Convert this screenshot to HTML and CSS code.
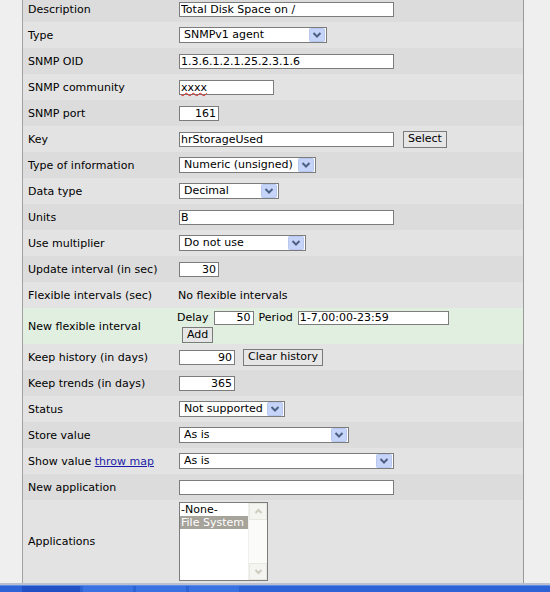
FILE: index.html
```html
<!DOCTYPE html>
<html>
<head>
<meta charset="utf-8">
<link rel="stylesheet" href="styles.css">
</head>
<body>
<div class="frame">
  <div class="row dark"><div class="lbl">Description</div><div class="val"><input class="txt w215" value="Total Disk Space on /"></div></div>
  <div class="row light"><div class="lbl">Type</div><div class="val"><div class="sel w148"><span class="st">SNMPv1 agent</span><svg class="arr" width="16" height="14" viewBox="0 0 16 14"><rect x="0.5" y="0.5" width="15" height="13" rx="1" fill="#c5d4f8" stroke="#b6c8f0"/><path d="M4.5 5 L8 8.5 L11.5 5" fill="none" stroke="#4d6185" stroke-width="2"/></svg></div></div></div>
  <div class="row dark"><div class="lbl">SNMP OID</div><div class="val"><input class="txt w215" value="1.3.6.1.2.1.25.2.3.1.6"></div></div>
  <div class="row light"><div class="lbl">SNMP community</div><div class="val"><div class="txt w95 fake"><span class="spell">xxxx</span></div></div></div>
  <div class="row dark"><div class="lbl">SNMP port</div><div class="val"><input class="txt w40 num" value="161"></div></div>
  <div class="row light"><div class="lbl">Key</div><div class="val"><input class="txt w215" value="hrStorageUsed"><button class="btn gap9">Select</button></div></div>
  <div class="row dark"><div class="lbl">Type of information</div><div class="val"><div class="sel w137"><span class="st">Numeric (unsigned)</span><svg class="arr" width="16" height="14" viewBox="0 0 16 14"><rect x="0.5" y="0.5" width="15" height="13" rx="1" fill="#c5d4f8" stroke="#b6c8f0"/><path d="M4.5 5 L8 8.5 L11.5 5" fill="none" stroke="#4d6185" stroke-width="2"/></svg></div></div></div>
  <div class="row light"><div class="lbl">Data type</div><div class="val"><div class="sel w100"><span class="st">Decimal</span><svg class="arr" width="16" height="14" viewBox="0 0 16 14"><rect x="0.5" y="0.5" width="15" height="13" rx="1" fill="#c5d4f8" stroke="#b6c8f0"/><path d="M4.5 5 L8 8.5 L11.5 5" fill="none" stroke="#4d6185" stroke-width="2"/></svg></div></div></div>
  <div class="row dark"><div class="lbl">Units</div><div class="val"><input class="txt w215" value="B"></div></div>
  <div class="row light"><div class="lbl">Use multiplier</div><div class="val"><div class="sel w127"><span class="st">Do not use</span><svg class="arr" width="16" height="14" viewBox="0 0 16 14"><rect x="0.5" y="0.5" width="15" height="13" rx="1" fill="#c5d4f8" stroke="#b6c8f0"/><path d="M4.5 5 L8 8.5 L11.5 5" fill="none" stroke="#4d6185" stroke-width="2"/></svg></div></div></div>
  <div class="row dark"><div class="lbl">Update interval (in sec)</div><div class="val"><input class="txt w40 num" value="30"></div></div>
  <div class="row light"><div class="lbl">Flexible intervals (sec)</div><div class="val"><span class="plain">No flexible intervals</span></div></div>
  <div class="row green tall"><div class="lbl">New flexible interval</div>
    <div class="val stack">
      <div class="line"><span class="plain">Delay</span><input class="txt w40 num h14" value="50"><span>Period</span><input class="txt w151 h14" value="1-7,00:00-23:59"></div>
      <button class="btn add">Add</button>
    </div>
  </div>
  <div class="row light"><div class="lbl">Keep history (in days)</div><div class="val"><input class="txt w56 num" value="90"><button class="btn gap8">Clear history</button></div></div>
  <div class="row dark"><div class="lbl">Keep trends (in days)</div><div class="val"><input class="txt w56 num" value="365"></div></div>
  <div class="row light"><div class="lbl">Status</div><div class="val"><div class="sel w106"><span class="st">Not supported</span><svg class="arr" width="16" height="14" viewBox="0 0 16 14"><rect x="0.5" y="0.5" width="15" height="13" rx="1" fill="#c5d4f8" stroke="#b6c8f0"/><path d="M4.5 5 L8 8.5 L11.5 5" fill="none" stroke="#4d6185" stroke-width="2"/></svg></div></div></div>
  <div class="row dark"><div class="lbl">Store value</div><div class="val"><div class="sel w170"><span class="st">As is</span><svg class="arr" width="16" height="14" viewBox="0 0 16 14"><rect x="0.5" y="0.5" width="15" height="13" rx="1" fill="#c5d4f8" stroke="#b6c8f0"/><path d="M4.5 5 L8 8.5 L11.5 5" fill="none" stroke="#4d6185" stroke-width="2"/></svg></div></div></div>
  <div class="row light"><div class="lbl">Show value <a class="lnk" href="#">throw map</a></div><div class="val"><div class="sel w215"><span class="st">As is</span><svg class="arr" width="16" height="14" viewBox="0 0 16 14"><rect x="0.5" y="0.5" width="15" height="13" rx="1" fill="#c5d4f8" stroke="#b6c8f0"/><path d="M4.5 5 L8 8.5 L11.5 5" fill="none" stroke="#4d6185" stroke-width="2"/></svg></div></div></div>
  <div class="row dark"><div class="lbl">New application</div><div class="val"><input class="txt w215" value=""></div></div>
  <div class="row light apps"><div class="lbl">Applications</div>
    <div class="val">
      <div class="listbox">
        <div class="opts">
          <div class="opt">-None-</div>
          <div class="opt selected">File System</div>
        </div>
        <div class="sbar">
          <div class="sbtn"><svg width="15" height="15" viewBox="0 0 15 15"><path d="M4.5 9 L7.5 6 L10.5 9" fill="none" stroke="#cdccbf" stroke-width="2"/></svg></div>
          <div class="strack"></div>
          <div class="sbtn"><svg width="15" height="15" viewBox="0 0 15 15"><path d="M4.5 6 L7.5 9 L10.5 6" fill="none" stroke="#cdccbf" stroke-width="2"/></svg></div>
        </div>
      </div>
    </div>
  </div>
</div>
<div class="taskline"></div>
<div class="taskbar"><div class="tb-start"></div><div class="tb-item"></div><div class="tb-item"></div><div class="tb-item"></div></div>
</body>
</html>
```

FILE: styles.css
```css
html, body {
  margin: 0;
  padding: 0;
}
body {
  background: #efefef;
  font-family: "DejaVu Sans", Verdana, sans-serif;
  font-size: 11px;
  color: #000;
  height: 592px;
  overflow: hidden;
}
.frame {
  margin-top: -4px;
  margin-left: 22px;
  width: 500px;
  border-left: 1px solid #a2a2a2;
  border-right: 1px solid #9a9a9a;
}
.row {
  display: grid;
  grid-template-columns: 153px 1fr;
  align-items: center;
  height: 26px;
}
.row.dark { background: #dcdcdc; }
.row.light { background: #e3e3e3; }
.row.green { background: #e0efe0; }
.row.tall { height: 36px; }
.row.apps { height: 83px; }
.lbl {
  padding-left: 5px;
  white-space: nowrap;
}
.lnk {
  color: #1c1ca8;
  text-decoration: underline;
}
.val {
  padding-left: 3px;
  display: flex;
  align-items: center;
}
.plain { margin-left: -1px; }
.txt {
  box-sizing: border-box;
  height: 15px;
  margin: 0;
  padding: 0 1px;
  border: 1px solid #7c7c7c;
  background: #fff;
  font-family: "DejaVu Sans", Verdana, sans-serif;
  font-size: 11px;
  color: #000;
  outline: none;
  line-height: 13px;
}
.txt.h14 { height: 14px; }
.txt.num { text-align: right; padding-right: 2px; }
.fake { display: flex; align-items: center; }
.spell {
  text-decoration: underline wavy #e02020;
  text-decoration-thickness: 1px;
}
.w40 { width: 40px; }
.w56 { width: 56px; }
.w95 { width: 95px; }
.w100 { width: 100px; }
.w106 { width: 106px; }
.w127 { width: 127px; }
.w137 { width: 137px; }
.w148 { width: 148px; }
.w151 { width: 151px; }
.w170 { width: 170px; }
.w215 { width: 215px; }
.sel {
  box-sizing: border-box;
  height: 16px;
  border: 1px solid #7c7c7c;
  background: #fff;
  display: flex;
  align-items: center;
  padding: 0 1px 0 4px;
}
.sel .st {
  flex: 1;
  white-space: nowrap;
  overflow: hidden;
  line-height: 14px;
}
.sel .arr { display: block; flex: none; }
.btn {
  box-sizing: border-box;
  height: 17px;
  margin: 0;
  padding: 0 4px;
  border: 1px solid #7a7a7a;
  background: #e6e6e6;
  font-family: "DejaVu Sans", Verdana, sans-serif;
  font-size: 11px;
  color: #000;
  line-height: 14px;
}
.gap9 { margin-left: 9px; }
.gap8 { margin-left: 8px; }
.val.stack {
  flex-direction: column;
  align-items: flex-start;
  padding-top: 2px;
  align-self: start;
  padding-left: 2px;
}
.line {
  display: flex;
  align-items: center;
  gap: 5px;
  height: 15px;
}
.add { margin-left: 4px; margin-top: 2px; height: 16px; }
.listbox {
  box-sizing: border-box;
  width: 89px;
  height: 79px;
  border: 1px solid #7c7c7c;
  background: #fff;
  display: flex;
}
.opts { flex: 1; }
.opt {
  height: 13px;
  line-height: 13px;
  padding-left: 1px;
  white-space: nowrap;
}
.opt.selected {
  background: #a6a39b;
  color: #fff;
}
.sbar {
  width: 18px;
  display: flex;
  flex-direction: column;
  background: #fbfbf9;
  border-left: 1px solid #f0f0ee;
}
.sbtn {
  box-sizing: border-box;
  height: 17px;
  border: 1px solid #e8e7e0;
  background: #f4f4f0;
  display: flex;
  align-items: center;
  justify-content: center;
}
.sbtn svg { display: block; }
.strack { flex: 1; }
.taskline {
  height: 2px;
  background: #b9bfcc;
}
.taskbar {
  height: 7px;
  background: #2e63d6;
  border-top: 1px solid #5c8ce9;
  display: flex;
  gap: 3px;
  padding-left: 22px;
}
.tb-start {
  width: 58px;
  background: #2150c4;
}
.tb-item {
  width: 50px;
  background: #3a72e2;
}
```
